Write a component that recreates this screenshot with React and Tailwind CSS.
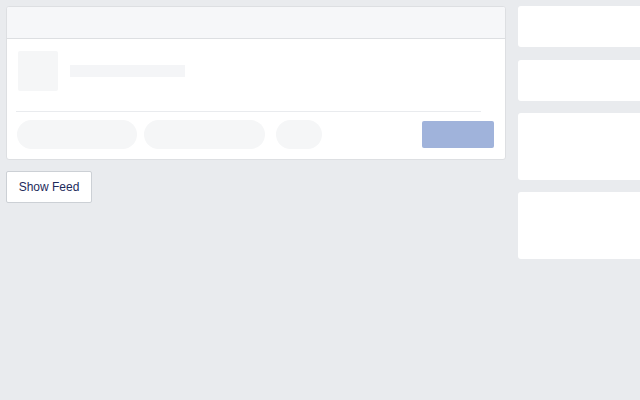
export default function App() {
  return (
    <div
      className="flex h-[400px] w-[640px] overflow-hidden bg-[#e9ebee] pl-[6px] pt-[6px]"
      style={{ fontFamily: '"Liberation Sans", Arial, sans-serif' }}
    >
      {/* Feed column */}
      <div className="w-[500px] shrink-0">
        <div className="overflow-hidden rounded-[3px] border border-[#dddfe2] bg-white">
          <div className="h-[32px] border-b border-[#dddfe2] bg-[#f6f7f9]" />
          <div className="pl-[11px] pt-[12px]">
            <div className="flex items-start">
              <div className="h-[40px] w-[40px] rounded-[2px] bg-[#f5f6f7]" />
              <div className="ml-[12px] mt-[14px] h-[12px] w-[115px] bg-[#f4f5f7]" />
            </div>
          </div>
          <div className="ml-[9px] mt-[20px] h-px w-[465px] bg-[#e9ebee]" />
          <div className="flex items-center pb-[10px] pl-[10px] pr-[11px] pt-[8px]">
            <div className="h-[29px] w-[120px] rounded-full bg-[#f5f6f7]" />
            <div className="ml-[7px] h-[29px] w-[121px] rounded-full bg-[#f5f6f7]" />
            <div className="ml-[11px] h-[29px] w-[46px] rounded-full bg-[#f5f6f7]" />
            <div className="ml-auto h-[27px] w-[72px] rounded-[2px] bg-[#a0b3db]" />
          </div>
        </div>
        <button className="mt-[11px] h-[32px] w-[86px] rounded-[2px] border border-[#ccd0d5] bg-white text-[12px] text-[#1d2a5b]">
          Show Feed
        </button>
      </div>

      {/* Right rail */}
      <div className="ml-[12px] flex w-[140px] shrink-0 flex-col">
        <div className="h-[41px] rounded-[3px] bg-white" />
        <div className="mt-[13px] h-[41px] rounded-[3px] bg-white" />
        <div className="mt-[12px] h-[67px] rounded-[3px] bg-white" />
        <div className="mt-[12px] h-[67px] rounded-[3px] bg-white" />
      </div>
    </div>
  );
}
